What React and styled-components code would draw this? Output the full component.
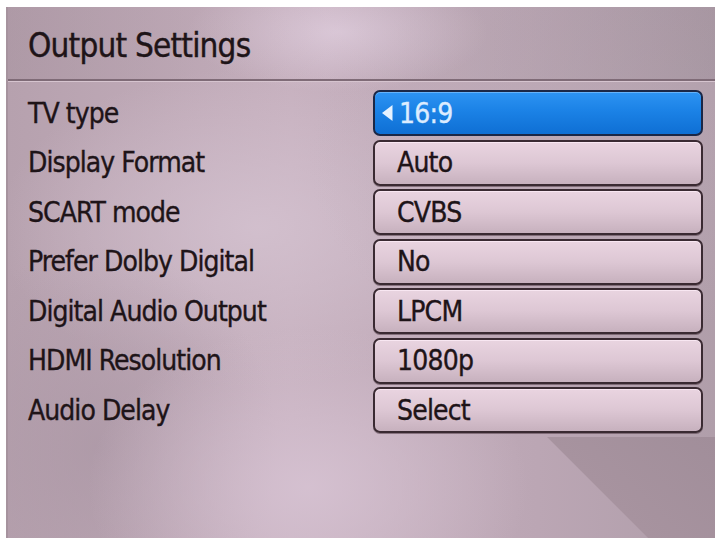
import React from "react";
import styled, { createGlobalStyle } from "styled-components";

const GlobalStyle = createGlobalStyle`
  html, body {
    margin: 0;
    padding: 0;
    background: #ffffff;
  }
  body {
    font-family: "DejaVu Sans Condensed", "DejaVu Sans", sans-serif;
  }
`;

const Page = styled.div`
  width: 720px;
  height: 543px;
  padding: 7px 5px 5px 6px;
  box-sizing: border-box;
`;

const Panel = styled.div`
  width: 709px;
  height: 531px;
  display: flex;
  flex-direction: column;
  box-sizing: border-box;
  border-left: 2px solid #a6939e;
  background:
    linear-gradient(45deg, transparent 71px, #a7939f 72px, #a18e9a) 539px 430px / 168px 101px no-repeat,
    radial-gradient(ellipse 150px 60px at 330px 25px, rgba(222, 204, 220, 0.9), transparent),
    radial-gradient(ellipse 260px 200px at 560px 150px, rgba(190, 172, 184, 0.6), transparent),
    radial-gradient(ellipse 220px 160px at 300px 480px, rgba(214, 194, 210, 0.9), transparent),
    radial-gradient(ellipse 180px 200px at 90px 440px, rgba(170, 150, 164, 0.7), transparent),
    radial-gradient(ellipse 260px 160px at 250px 220px, rgba(212, 194, 208, 0.85), transparent),
    linear-gradient(90deg, #b6a1ae 0%, #c6b0be 40%, #bba6b4 75%, #b09eaa 100%);
`;

const Header = styled.div`
  height: 72px;
  display: flex;
  align-items: center;
  padding-left: 20px;
  border-bottom: 2px solid #7f6b77;
  box-shadow: 0 1px 0 #d6c4cf;
  background: linear-gradient(90deg, rgba(160, 140, 152, 0.35), rgba(200, 180, 194, 0.1) 45%, rgba(150, 136, 146, 0.35));
`;

const Title = styled.h1`
  margin: 0;
  font-size: 33px;
  font-weight: normal;
  letter-spacing: -0.8px;
  color: #1e1418;
  -webkit-text-stroke: 0.4px #1e1418;
  transform: translateY(2px);
`;

const List = styled.div`
  display: flex;
  flex-direction: column;
  gap: 3.5px;
  padding: 9px 12px 0 20px;
`;

const Row = styled.div`
  display: grid;
  grid-template-columns: 1fr 330px;
  align-items: center;
  height: 46px;
`;

const Label = styled.span`
  font-size: 28px;
  letter-spacing: -0.95px;
  color: #1e1418;
  -webkit-text-stroke: 0.35px #1e1418;
  white-space: nowrap;
`;

const Field = styled.div`
  height: 46px;
  box-sizing: border-box;
  display: flex;
  align-items: center;
  gap: 6px;
  padding-left: ${(p) => (p.$active ? "6px" : "22px")};
  border: 2px solid ${(p) => (p.$active ? "#1b2746" : "#3a2a32")};
  border-radius: 7px;
  background: ${(p) =>
    p.$active
      ? "linear-gradient(180deg, #2d93f2 0%, #1b82e6 45%, #0f6fd4 100%)"
      : "linear-gradient(180deg, #e9d4e0 0%, #ddc7d4 50%, #c7b1be 100%)"};
  box-shadow: ${(p) =>
    p.$active
      ? "inset 0 1px 0 rgba(140, 200, 255, 0.6)"
      : "inset 0 1px 0 rgba(255, 240, 250, 0.7), 0 1px 0 rgba(70, 50, 60, 0.5)"};
`;

const Value = styled.span`
  font-size: 28px;
  letter-spacing: -0.8px;
  color: ${(p) => (p.$active ? "#dcecff" : "#1e1418")};
  -webkit-text-stroke: 0.35px ${(p) => (p.$active ? "#dcecff" : "#1e1418")};
`;

const ArrowIcon = styled.svg`
  flex: none;
  display: block;
`;

const Arrow = () => (
  <ArrowIcon width="12" height="18" viewBox="0 0 12 18" aria-hidden="true">
    <path d="M11.5 1 L1 9 L11.5 17 Z" fill="#e6f2ff" />
  </ArrowIcon>
);

const rows = [
  ["TV type", "16:9"],
  ["Display Format", "Auto"],
  ["SCART mode", "CVBS"],
  ["Prefer Dolby Digital", "No"],
  ["Digital Audio Output", "LPCM"],
  ["HDMI Resolution", "1080p"],
  ["Audio Delay", "Select"],
];

export default function App() {
  return (
    <>
      <GlobalStyle />
      <Page>
        <Panel>
          <Header>
            <Title>Output Settings</Title>
          </Header>
          <List>
            {rows.map(([label, value], i) => (
              <Row key={label}>
                <Label>{label}</Label>
                <Field $active={i === 0}>
                  {i === 0 && <Arrow />}
                  <Value $active={i === 0}>{value}</Value>
                </Field>
              </Row>
            ))}
          </List>
        </Panel>
      </Page>
    </>
  );
}
